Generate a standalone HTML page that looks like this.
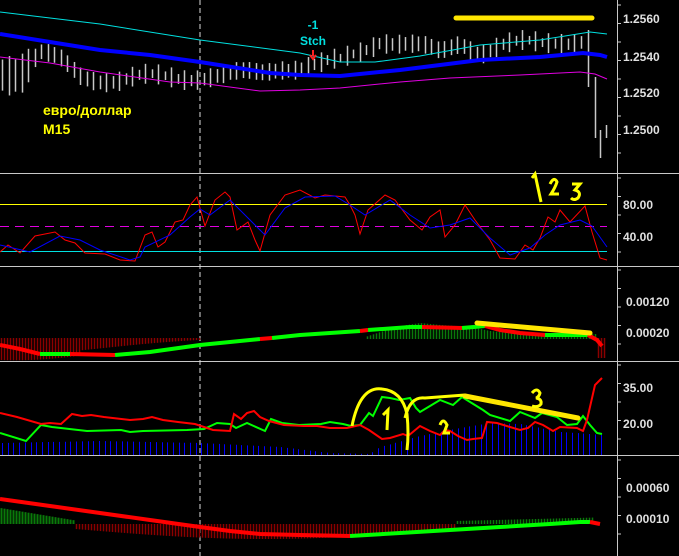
<!DOCTYPE html>
<html><head><meta charset="utf-8"><style>
html,body{margin:0;padding:0;background:#000;width:679px;height:556px;overflow:hidden}
svg{display:block}
text{font-family:"Liberation Sans",sans-serif;font-weight:bold}
</style></head><body>
<svg id="s" width="679" height="556" viewBox="0 0 679 556" xmlns="http://www.w3.org/2000/svg">
<rect width="679" height="556" fill="#000"/>
<g id="bars"></g>
<g stroke="#c8c8c8" stroke-width="1.5">
<line x1="588.5" y1="30" x2="588.5" y2="87"/>
<line x1="595.5" y1="77" x2="595.5" y2="138"/>
<line x1="600.5" y1="130" x2="600.5" y2="158"/>
<line x1="606.5" y1="125" x2="606.5" y2="138"/>
</g>
<g stroke="#c8c8c8" stroke-width="1">
<line x1="0" y1="173.5" x2="679" y2="173.5"/>
<line x1="0" y1="266.5" x2="679" y2="266.5"/>
<line x1="0" y1="361.5" x2="679" y2="361.5"/>
<line x1="0" y1="455.5" x2="679" y2="455.5"/>
<line x1="617.5" y1="0" x2="617.5" y2="556"/>
</g>
<line x1="200" y1="0" x2="200" y2="556" stroke="#ddd" stroke-dasharray="5,3"/>
<polyline fill="none" stroke="#00e0e0" stroke-width="1" points="0,12 100,24 200,40 300,53 340,62 375,62 420,56 480,45 540,40 590,32 607,34"/>
<polyline fill="none" stroke="#0000ff" stroke-width="4" points="0,34 50,42 100,50 150,55 200,62 270,73 300,75 340,76 400,70 480,60 540,57 583,53 600,55 607,57"/>
<polyline fill="none" stroke="#e000e0" stroke-width="1" points="0,57 50,63 100,72 170,82 200,83 260,91 300,90 340,88 400,82 450,78 520,75 580,72 595,74 607,79"/>
<line x1="456" y1="18" x2="592" y2="18" stroke="#ffe600" stroke-width="5" stroke-linecap="round"/>
<text x="313" y="29" fill="#00e0e0" font-size="12" text-anchor="middle">-1</text>
<text x="313" y="45" fill="#00e0e0" font-size="12" text-anchor="middle">Stch</text>
<path d="M313,50 v6 M310,55 l3,4 l3,-4" stroke="#ff2020" stroke-width="2" fill="none"/>
<text x="43" y="115" fill="#ffff00" font-size="14">евро/доллар</text>
<text x="43" y="134" fill="#ffff00" font-size="14">M15</text>
<line x1="0" y1="204.5" x2="607" y2="204.5" stroke="#ffff00"/>
<line x1="0" y1="226.5" x2="607" y2="226.5" stroke="#e000e0" stroke-dasharray="9,6"/>
<line x1="0" y1="251.5" x2="607" y2="251.5" stroke="#00e0e0"/>
<polyline fill="none" stroke="#ff0000" points="0,252 8,245 20,253 35,236 45,234 55,232 65,240 75,243 85,253 105,254 120,260 135,261 145,235 152,232 158,247 165,242 175,222 183,220 190,205 197,197 205,226 215,200 225,192 230,197 237,230 248,222 255,240 260,251 270,215 285,195 300,190 315,198 325,195 345,197 350,205 355,215 360,234 368,210 385,195 395,200 410,220 422,230 430,217 440,210 445,237 455,225 465,205 475,220 490,240 500,258 515,259 525,245 533,250 540,238 548,217 555,222 560,210 570,222 585,206 592,232 600,258 607,260"/>
<polyline fill="none" stroke="#0000ff" points="0,245 30,252 60,236 80,240 100,250 130,260 140,257 145,247 170,235 190,217 200,209 210,215 230,200 245,215 265,235 285,208 305,197 335,196 350,205 365,215 390,200 410,215 430,228 450,225 470,218 490,238 510,255 530,248 545,235 560,225 580,220 592,226 607,247"/>
<path d="M532,178 l3,-4 l6,28 M550,184 q4,-8 7,-2 q-2,6 -6,12 h8 M572,184 h8 l-5,6 q7,2 3,8 q-4,3 -7,0" stroke="#ffff00" stroke-width="3" fill="none"/>
<g id="macdh"></g>
<polyline fill="none" stroke="#ff0000" stroke-width="4" points="0,345 20,349 40,354"/>
<polyline fill="none" stroke="#00ff00" stroke-width="4" points="40,354 70,354"/>
<polyline fill="none" stroke="#ff0000" stroke-width="4" points="70,354 115,355"/>
<polyline fill="none" stroke="#00ff00" stroke-width="4" points="115,355 150,352 200,345 260,339"/>
<polyline fill="none" stroke="#ff0000" stroke-width="4" points="260,339 272,338"/>
<polyline fill="none" stroke="#00ff00" stroke-width="4" points="272,338 300,335 360,331"/>
<polyline fill="none" stroke="#ff0000" stroke-width="4" points="360,331 368,330"/>
<polyline fill="none" stroke="#00ff00" stroke-width="4" points="368,330 410,327 422,327"/>
<polyline fill="none" stroke="#ff0000" stroke-width="4" points="422,327 462,328"/>
<polyline fill="none" stroke="#00ff00" stroke-width="4" points="462,328 485,326"/>
<polyline fill="none" stroke="#ff0000" stroke-width="4" points="485,326 500,330 520,333 545,335"/>
<polyline fill="none" stroke="#00ff00" stroke-width="4" points="545,335 588,335"/>
<polyline fill="none" stroke="#ff0000" stroke-width="4" points="588,335 597,340 602,346"/>
<line x1="477" y1="323" x2="590" y2="333" stroke="#ffe600" stroke-width="5" stroke-linecap="round"/>
<g id="adxh"></g>
<polyline fill="none" stroke="#00ff00" stroke-width="2" points="0,433 26,441 41,425 52,427 87,431 121,430 130,432 143,431 187,430 204,429 217,423 230,424 236,428 247,423 265,431 271,419 282,423 299,425 321,424 330,422 343,424 351,426 360,425 369,413 373,416 382,397 390,398 399,400 410,398 416,408 420,412 440,400 453,405 462,397 483,410 490,415 510,421 520,412 535,418 542,413 557,417 567,425 577,424 583,416 590,425 597,433 602,434"/>
<polyline fill="none" stroke="#ff0000" stroke-width="2" points="0,413 17,417 41,424 50,423 61,424 72,414 82,416 91,415 104,417 130,420 143,419 152,417 163,420 178,422 195,424 213,430 230,431 234,414 241,419 247,413 254,411 260,417 269,421 284,425 304,426 317,426 330,428 347,428 360,425 369,430 382,439 390,438 403,434 408,436 420,426 430,431 440,435 445,430 450,431 458,436 467,440 473,439 482,438 487,422 497,423 510,427 520,430 528,428 535,422 543,425 553,431 560,427 577,428 583,431 587,420 595,385 602,378"/>
<path d="M352,426 q8,-40 30,-37 q20,2 25,25 q2,20 0,36 M405,418 q5,-22 20,-20 l40,-3 M383,415 l5,-5 l-1,20 M440,425 q3,-8 7,0 l-3,8 h6" stroke="#ffff00" stroke-width="3" fill="none"/>
<line x1="465" y1="396" x2="578" y2="418" stroke="#ffe600" stroke-width="5" stroke-linecap="round"/>
<path d="M532,393 q5,-6 8,0 q-1,4 -4,5 q6,1 5,6 q-3,4 -9,2" stroke="#ffff00" stroke-width="3" fill="none"/>
<g id="both"></g>
<polyline fill="none" stroke="#ff0000" stroke-width="4" points="0,499 50,506 100,513 150,520 200,527 230,531 260,534 300,535 350,536"/>
<polyline fill="none" stroke="#00ff00" stroke-width="4" points="350,536 400,533 450,530 500,527 550,524 580,522 590,522"/>
<polyline fill="none" stroke="#ff0000" stroke-width="4" points="590,522 600,524"/>
<g fill="#e0e0e0" font-size="12">
<text x="623" y="23">1.2560</text>
<text x="623" y="61">1.2540</text>
<text x="623" y="97">1.2520</text>
<text x="623" y="134">1.2500</text>
<text x="623" y="209">80.00</text>
<text x="623" y="241">40.00</text>
<text x="626" y="306">0.00120</text>
<text x="626" y="337">0.00020</text>
<text x="623" y="392">35.00</text>
<text x="623" y="428">20.00</text>
<text x="626" y="492">0.00060</text>
<text x="626" y="523">0.00010</text>
</g>
<g stroke="#c8c8c8" id="ticks"></g>
</svg>
<script>
(function(){
var NS="http://www.w3.org/2000/svg";
function ln(g,x1,y1,x2,y2,c,w){var l=document.createElementNS(NS,"line");l.setAttribute("x1",x1);l.setAttribute("y1",y1);l.setAttribute("x2",x2);l.setAttribute("y2",y2);l.setAttribute("stroke",c);l.setAttribute("stroke-width",w||1);g.appendChild(l);}
function interp(pts,x){for(var i=0;i<pts.length-1;i++){if(x>=pts[i][0]&&x<=pts[i+1][0]){var t=(x-pts[i][0])/(pts[i+1][0]-pts[i][0]);return pts[i][1]+t*(pts[i+1][1]-pts[i][1]);}}return pts[pts.length-1][1];}
var price=[[0,70],[20,72],[40,55],[60,62],[80,75],[120,80],[160,78],[200,75],[230,76],[260,74],[280,66],[320,65],[340,63],[360,52],[380,38],[400,42],[420,48],[440,55],[460,42],[480,50],[500,45],[540,45],[560,40],[585,38]];
var bg=document.getElementById("bars");
for(var x=2;x<=584;x+=6.5){var m=interp(price,x);var h=8+12*Math.abs(Math.sin(x*1.7))+(x<30?20:0);var xx=Math.round(x)+0.5;var o=5*Math.sin(x*0.9);ln(bg,xx,m-h/2+o,xx,m+h/2+o,"#c8c8c8",1.5);}
var mh=document.getElementById("macdh");
var gt=[[365,337],[380,332],[400,326],[420,323],[440,325],[470,327],[490,331],[520,334],[598,334]];
for(var x=1;x<=604;x+=3){if(x<200){var v=14+8*Math.sin(x/60)*(1-x/220)+(x<80?8:0);ln(mh,x+0.5,338,x+0.5,338+Math.max(2,v*(1-x/230)),"#8b0000",1.5);}else if(x<365){}else if(x<598){ln(mh,x+0.5,339,x+0.5,interp(gt,x),"#0a7a0a",1.5);}else{ln(mh,x+0.5,338,x+0.5,358,"#8b0000",1.5);}}
var ah=document.getElementById("adxh");
var adx=[[0,443],[100,441],[200,443],[280,447],[330,453],[370,454],[380,447],[420,436],[460,428],[490,423],[520,424],[560,432],[605,435]];
for(var x=2;x<=604;x+=5.7){ln(ah,Math.round(x)+0.5,455,Math.round(x)+0.5,interp(adx,x),"#0000ff",1);}
var bh=document.getElementById("both");
for(var x=1;x<=604;x+=3){if(x<75){ln(bh,x+0.5,524,x+0.5,508+x/6,"#0a7a0a",2);}else if(x<455){var d=5+10*Math.sin((x-75)/380*Math.PI);ln(bh,x+0.5,524,x+0.5,524+d,"#8b0000",1.5);}else if(x<595){ln(bh,x+0.5,524,x+0.5,524-3-(x-455)/40,"#0a7a0a",1.5);}}
var tk=document.getElementById("ticks");
[[5,170],[178,264],[270,358],[365,452],[460,549]].forEach(function(r){for(var y=r[0];y<r[1];y+=18.5){ln(tk,617,y,621,y,"#c8c8c8",1);}});
})();
</script>
</body></html>
